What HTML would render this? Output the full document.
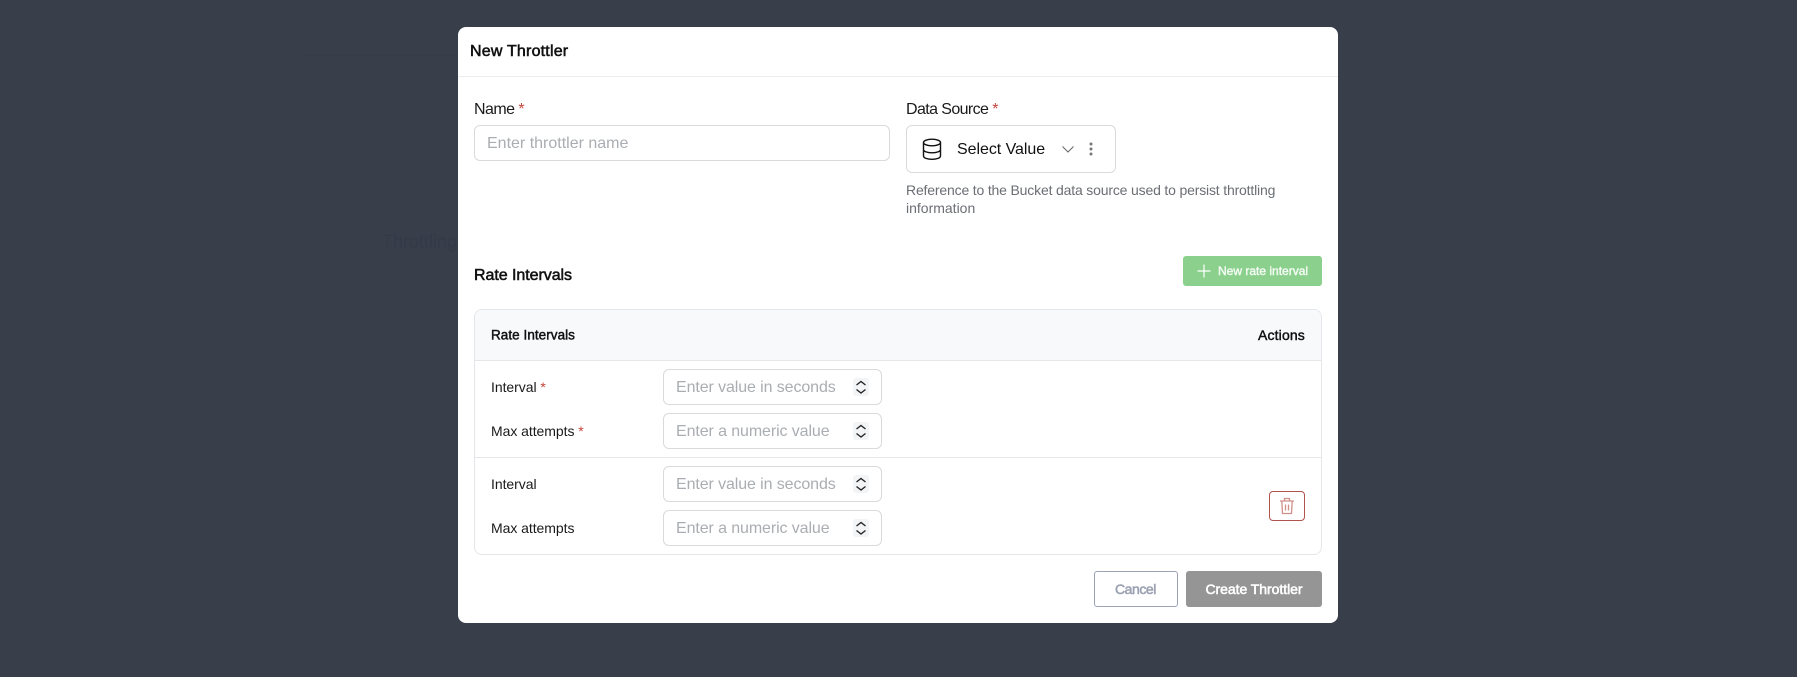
<!DOCTYPE html>
<html><head><meta charset="utf-8"><title>New Throttler</title>
<style>
html,body{margin:0;padding:0;width:1797px;height:677px;overflow:hidden;background:#393e4b;font-family:"Liberation Sans",sans-serif;}
#w{position:absolute;left:0;top:0;width:1797px;height:677px;filter:blur(.3px);}
.a{position:absolute;box-sizing:border-box;white-space:nowrap;}
.t{position:absolute;white-space:nowrap;transform:translateY(-50%);}
.inp{border:1px solid #d8dadd;border-radius:6px;background:#fff;}
.ph{color:#aaadb1;font-size:16px;}
.lbl{font-size:14px;color:#1a1a1a;letter-spacing:-.05px;}
.req{color:#c5453c;}
.m{font-weight:400;-webkit-text-stroke:.55px currentColor;}
</style></head><body>
<div id="w">
<div class="a" style="left:298px;top:0;width:1px;height:677px;background:#383d4a;"></div>
<div class="a" style="left:300px;top:55px;width:158px;height:1px;background:#373c49;"></div>
<div class="t" style="left:382px;top:242px;font-size:18px;color:#363b48;-webkit-text-stroke:.3px #363b48;">Throttling</div>
<div class="a" style="left:458px;top:27px;width:880px;height:596px;background:#fff;border-radius:8px;"></div>
<div class="a" style="left:458px;top:76px;width:880px;height:1px;background:#eceef0;"></div>
<div class="t m" style="left:470px;top:52px;font-size:16px;color:#111;letter-spacing:.2px;">New Throttler</div>

<div class="t" style="left:474px;top:110px;font-size:16px;color:#1a1a1a;letter-spacing:-.55px;">Name <span class="req">*</span></div>
<div class="a inp" style="left:474px;top:125px;width:416px;height:36px;"></div>
<div class="t ph" style="left:487px;top:144px;">Enter throttler name</div>

<div class="t" style="left:906px;top:110px;font-size:16px;color:#1a1a1a;letter-spacing:-.6px;">Data Source <span class="req">*</span></div>
<div class="a inp" style="left:906px;top:125px;width:210px;height:48px;"></div>
<svg class="a" style="left:920px;top:137px" width="24" height="24" viewBox="0 0 24 24" fill="none" stroke="#111" stroke-width="1.4"><ellipse cx="12" cy="5.500" rx="8.500" ry="3.300"/><path d="M3.500 5.500v13.500c0 2 3.800 3.300 8.500 3.300s8.500-1.300 8.500-3.300V5.500M3.500 12.500c0 2 3.800 3.300 8.500 3.300s8.500-1.300 8.500-3.300"/></svg>
<div class="t" style="left:957px;top:149.500px;font-size:16px;color:#111;letter-spacing:-.05px;">Select Value</div>
<svg class="a" style="left:1061px;top:144px" width="14" height="10" viewBox="0 0 14 10" fill="none" stroke="#666" stroke-width="1"><path d="M1.500 2.500L7 8l5.500-5.500"/></svg>
<svg class="a" style="left:1088px;top:142px" width="6" height="14" viewBox="0 0 6 14" fill="#777"><circle cx="3" cy="2" r="1.500"/><circle cx="3" cy="7" r="1.500"/><circle cx="3" cy="12" r="1.500"/></svg>
<div class="t" style="left:906px;top:190px;font-size:14px;color:#6b6e73;letter-spacing:-.17px;">Reference to the Bucket data source used to persist throttling</div>
<div class="t" style="left:906px;top:208px;font-size:14px;color:#6b6e73;">information</div>

<div class="t m" style="left:474px;top:275.500px;font-size:16px;color:#111;letter-spacing:-.05px;">Rate Intervals</div>
<div class="a" style="left:1183px;top:256px;width:139px;height:30px;background:#8bd18d;border-radius:3px;"></div>
<svg class="a" style="left:1197px;top:264px" width="14" height="14" viewBox="0 0 14 14" stroke="#fff" stroke-width="1.2"><path d="M7 0.500v13M0.500 7h13"/></svg>
<div class="t" style="left:1218px;top:271px;font-size:12px;color:#f4fbf4;-webkit-text-stroke:.4px #f4fbf4;">New rate interval</div>

<div class="a" style="left:474px;top:309px;width:848px;height:246px;border:1px solid #e4e6e9;border-radius:8px;background:#fff;overflow:hidden;">
  <div style="position:absolute;left:0;top:0;width:100%;height:50px;background:#f8f9fb;border-bottom:1px solid #e4e6e9;box-sizing:content-box;"></div>
  <div style="position:absolute;left:0;top:147px;width:100%;height:1px;background:#e4e6e9;"></div>
</div>
<div class="t m" style="left:491px;top:335px;font-size:13.500px;color:#111;letter-spacing:.05px;-webkit-text-stroke-width:.45px;">Rate Intervals</div>
<div class="t m" style="left:1258px;top:335px;font-size:14px;color:#111;letter-spacing:.15px;-webkit-text-stroke-width:.45px;">Actions</div>

<div class="t lbl" style="left:491px;top:387px;">Interval <span class="req">*</span></div>
<div class="t lbl" style="left:491px;top:431px;">Max attempts <span class="req">*</span></div>
<div class="t lbl" style="left:491px;top:484px;">Interval</div>
<div class="t lbl" style="left:491px;top:528px;">Max attempts</div>

<div class="a inp" style="left:663px;top:369px;width:219px;height:36px;"></div>
<div class="a inp" style="left:663px;top:413px;width:219px;height:36px;"></div>
<div class="a inp" style="left:663px;top:466px;width:219px;height:36px;"></div>
<div class="a inp" style="left:663px;top:510px;width:219px;height:36px;"></div>
<div class="t ph" style="left:676px;top:388px;letter-spacing:-.1px;">Enter value in seconds</div>
<div class="t ph" style="left:676px;top:432px;letter-spacing:-.1px;">Enter a numeric value</div>
<div class="t ph" style="left:676px;top:485px;letter-spacing:-.1px;">Enter value in seconds</div>
<div class="t ph" style="left:676px;top:529px;letter-spacing:-.1px;">Enter a numeric value</div>

<svg class="a" style="left:853px;top:377px" width="16" height="20" viewBox="0 0 16 20"><rect y="1" width="16" height="18" rx="3" fill="#f3f4f5"/><path d="M3.500 8L8 4.500 12.500 8M3.500 12.500L8 16l4.500-3.500" fill="none" stroke="#222" stroke-width="1.300"/></svg>
<svg class="a" style="left:853px;top:421px" width="16" height="20" viewBox="0 0 16 20"><rect y="1" width="16" height="18" rx="3" fill="#f3f4f5"/><path d="M3.500 8L8 4.500 12.500 8M3.500 12.500L8 16l4.500-3.500" fill="none" stroke="#222" stroke-width="1.300"/></svg>
<svg class="a" style="left:853px;top:474px" width="16" height="20" viewBox="0 0 16 20"><rect y="1" width="16" height="18" rx="3" fill="#f3f4f5"/><path d="M3.500 8L8 4.500 12.500 8M3.500 12.500L8 16l4.500-3.500" fill="none" stroke="#222" stroke-width="1.300"/></svg>
<svg class="a" style="left:853px;top:518px" width="16" height="20" viewBox="0 0 16 20"><rect y="1" width="16" height="18" rx="3" fill="#f3f4f5"/><path d="M3.500 8L8 4.500 12.500 8M3.500 12.500L8 16l4.500-3.500" fill="none" stroke="#222" stroke-width="1.300"/></svg>

<div class="a" style="left:1269px;top:491px;width:36px;height:30px;border:1px solid #b0534d;border-radius:4px;"></div>
<svg class="a" style="left:1279px;top:497px" width="16" height="18" viewBox="0 0 16 18" fill="none" stroke="#d0908a" stroke-width="1.300"><path d="M1 4h14M5.500 4V1.500h5V4M2.800 4l.7 12.500h9L13.200 4M6.500 7.500v6M9.500 7.500v6"/></svg>

<div class="a" style="left:1094px;top:571px;width:84px;height:36px;border:1px solid #9da3b4;border-radius:3px;background:#fff;"></div>
<div class="t m" style="left:1115px;top:589px;font-size:14px;color:#9ba1b2;letter-spacing:-.45px;">Cancel</div>
<div class="a" style="left:1186px;top:571px;width:136px;height:36px;background:#959595;border-radius:3px;"></div>
<div class="t m" style="left:1205.500px;top:589px;font-size:14px;color:#fff;letter-spacing:-.05px;">Create Throttler</div>
</div>
</body></html>
